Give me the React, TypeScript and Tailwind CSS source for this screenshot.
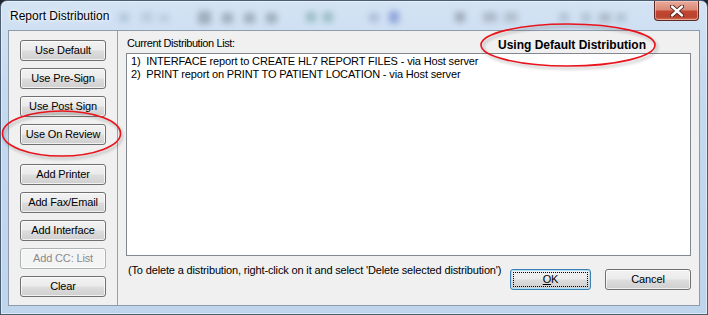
import React from "react";

const font = "font-['Liberation_Sans',Arial,sans-serif]";

function Btn({
  children,
  disabled,
  className = "",
}: {
  children: React.ReactNode;
  disabled?: boolean;
  className?: string;
}) {
  const look = disabled
    ? "border-[#adb2b5] bg-[#f4f4f4] text-[#8a8a8a]"
    : "border-[#707070] bg-[linear-gradient(180deg,#f2f2f2_0%,#ebebeb_48%,#dddddd_52%,#cfcfcf_100%)] text-black";
  return (
    <div
      className={`h-[21px] w-[86px] rounded-[3px] border ${look} flex items-center justify-center text-[11px] tracking-[-0.15px] leading-none shadow-[inset_0_0_0_1px_rgba(255,255,255,0.7)] ${className}`}
    >
      {children}
    </div>
  );
}

function TitleBackdrop() {
  return (
    <svg
      className="pointer-events-none absolute left-0 top-0"
      width="708"
      height="30"
      viewBox="0 0 708 30"
    >
      <defs>
        <filter id="bl" x="-80%" y="-80%" width="260%" height="260%">
          <feGaussianBlur stdDeviation="3" />
        </filter>
      </defs>
      <g filter="url(#bl)" opacity="0.42">
        <rect x="118" y="12" width="10" height="9" fill="#8aa0b8" />
        <rect x="140" y="11" width="12" height="10" fill="#9fb0c4" />
        <rect x="158" y="13" width="10" height="8" fill="#9fb0c4" />
        <rect x="197" y="10" width="13" height="13" fill="#5c6670" />
        <rect x="221" y="12" width="11" height="10" fill="#5c6670" />
        <rect x="243" y="12" width="11" height="10" fill="#5c6670" />
        <rect x="265" y="12" width="11" height="10" fill="#5c6670" />
        <rect x="305" y="11" width="10" height="10" fill="#4f8a88" />
        <rect x="322" y="11" width="10" height="10" fill="#4f8a88" />
        <rect x="368" y="12" width="10" height="9" fill="#7a90b0" />
        <rect x="388" y="10" width="10" height="12" fill="#3850b8" />
        <rect x="454" y="11" width="10" height="10" fill="#5b6068" />
        <rect x="482" y="11" width="14" height="10" fill="#7a8090" />
        <rect x="503" y="11" width="14" height="10" fill="#8a9098" />
        <rect x="558" y="12" width="10" height="9" fill="#8898a8" />
        <rect x="580" y="12" width="10" height="9" fill="#8898a8" />
        <rect x="598" y="12" width="12" height="9" fill="#7a8088" />
        <rect x="615" y="12" width="10" height="9" fill="#8898a8" />
      </g>
    </svg>
  );
}

function Annotations() {
  return (
    <svg
      className="pointer-events-none absolute left-0 top-0"
      width="708"
      height="315"
      viewBox="0 0 708 315"
    >
      <defs>
        <filter id="sh" x="-20%" y="-40%" width="140%" height="180%">
          <feGaussianBlur stdDeviation="1.6" />
        </filter>
      </defs>
      <g filter="url(#sh)" opacity="0.35">
        <ellipse cx="63" cy="136" rx="59" ry="22.5" fill="none" stroke="#555" strokeWidth="2" />
        <ellipse cx="570" cy="47.5" rx="87" ry="21" fill="none" stroke="#555" strokeWidth="2" />
      </g>
      <ellipse cx="61.5" cy="133.5" rx="59" ry="22.5" fill="none" stroke="#e8131b" strokeWidth="1.6" />
      <ellipse cx="568" cy="45" rx="87" ry="21" fill="none" stroke="#e8131b" strokeWidth="1.6" />
    </svg>
  );
}

export default function App() {
  return (
    <div className={`relative h-[315px] w-[708px] overflow-hidden bg-[#1e2630] ${font}`}>
      <div className="flex h-[315px] w-[708px] flex-col rounded-t-[7px] border border-[#4b5d72] bg-[linear-gradient(180deg,#d3e3f4_0%,#c5d9ef_30%,#bfd5ec_100%)] shadow-[inset_0_0_0_1px_rgba(255,255,255,0.45)]">
        {/* Title bar */}
        <div className="relative flex h-[29px] items-start justify-between">
          <TitleBackdrop />
          <div className="relative mt-[8px] pl-[9px] text-[12px] leading-[14px] text-black [text-shadow:0_0_6px_#ffffff,0_0_3px_#ffffff]">
            Report Distribution
          </div>
          <div className="relative mr-[8px] flex h-[20px] w-[45px] items-center justify-center rounded-b-[4px] border border-t-0 border-[#5b2a24] bg-[linear-gradient(180deg,#e9ab9b_0%,#d98a78_45%,#c24530_55%,#b8442e_85%,#d8775c_100%)] shadow-[inset_0_0_0_1px_rgba(255,210,200,0.55)]">
            <svg width="14" height="12" viewBox="0 0 14 12">
              <path
                d="M2 1.5 L12 10.5 M12 1.5 L2 10.5"
                stroke="#4a1c16"
                strokeWidth="4.2"
                strokeLinecap="round"
              />
              <path
                d="M2 1.5 L12 10.5 M12 1.5 L2 10.5"
                stroke="#ffffff"
                strokeWidth="2.4"
                strokeLinecap="round"
              />
            </svg>
          </div>
        </div>

        {/* Client area */}
        <div className="mx-[7px] flex h-[276px] border border-[#8e9bab] bg-[#f0f0f0] text-[11px] tracking-[-0.15px] text-black">
          {/* Left button panel */}
          <div className="flex w-[109px] flex-col gap-[7px] border-r border-[#a0a0a0] pl-[11px] pt-[9px]">
            <Btn>Use Default</Btn>
            <Btn>Use Pre-Sign</Btn>
            <Btn>Use Post Sign</Btn>
            <Btn>Use On Review</Btn>
            <Btn className="mt-[12px]">Add Printer</Btn>
            <Btn>Add Fax/Email</Btn>
            <Btn>Add Interface</Btn>
            <Btn disabled>Add CC: List</Btn>
            <Btn>Clear</Btn>
          </div>

          {/* Right panel */}
          <div className="flex flex-1 flex-col">
            <div className="flex h-[22px] items-start justify-between pl-[9px] pr-[53px] pt-[6px]">
              <span className="leading-[13px] tracking-[-0.4px]">Current Distribution List:</span>
              <span className="mt-[1px] text-[12px] font-bold leading-[14px] tracking-[0px]">
                Using Default Distribution
              </span>
            </div>
            <div className="ml-[8px] h-[203px] w-[565px] border border-[#828790] bg-white pl-[4px] pt-[1px] leading-[13px] whitespace-pre">
              <div>{"1)  INTERFACE report to CREATE HL7 REPORT FILES - via Host server"}</div>
              <div>{"2)  PRINT report on PRINT TO PATIENT LOCATION - via Host server"}</div>
            </div>
            <div className="flex items-start">
              <div className="ml-[10px] mt-[8px] w-[382px] leading-[13px] whitespace-nowrap">
                (To delete a distribution, right-click on it and select 'Delete selected distribution')
              </div>
              <div className="mt-[13px] flex gap-[14px]">
                <div className="flex h-[21px] w-[81px] items-center justify-center rounded-[3px] border border-[#3c7fb1] bg-[linear-gradient(180deg,#f2f2f2_0%,#ebebeb_48%,#dddddd_52%,#cfcfcf_100%)] shadow-[inset_0_0_0_1px_#aee0f9]">
                  <div className="flex h-[15px] w-[75px] items-center justify-center border border-dotted border-black leading-none">
                    <span className="underline underline-offset-[1px]">O</span>K
                  </div>
                </div>
                <Btn className="w-[82px]">Cancel</Btn>
              </div>
            </div>
          </div>
        </div>
      </div>
      <Annotations />
    </div>
  );
}
